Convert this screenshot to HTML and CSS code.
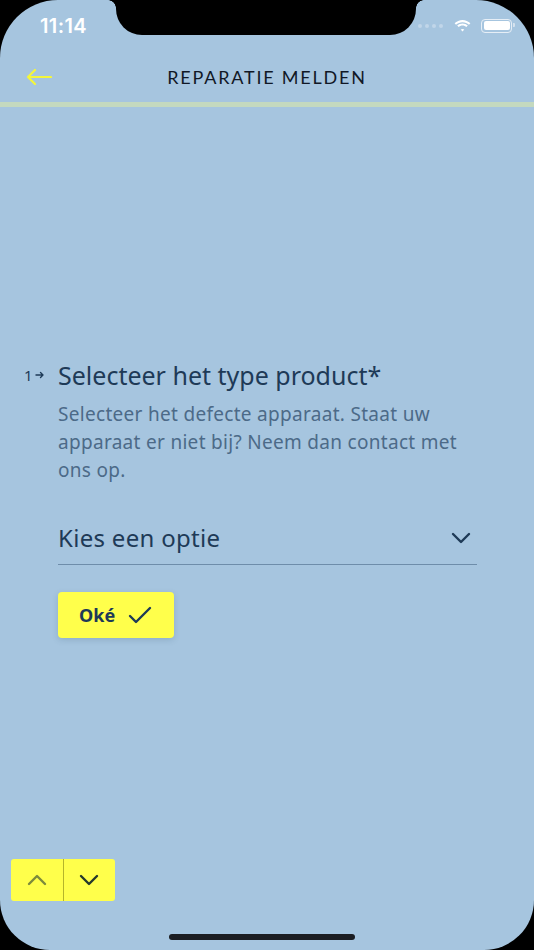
FILE: index.html
```html
<!DOCTYPE html>
<html lang="nl">
<head>
<meta charset="utf-8">
<title>Reparatie melden</title>
<link rel="stylesheet" href="styles.css">
</head>
<body>
<div class="screen">
  <div class="notch"></div>
  <div class="status">
    <span class="time">11:14</span>
    <div class="status-icons">
      <span class="dots"><i></i><i></i><i></i><i></i></span>
      <svg class="wifi" width="17" height="12" viewBox="0 0 17 12"><path d="M8.5 2.2c2.5 0 4.8 1 6.5 2.6l1.4-1.5C14.3 1.3 11.5 0 8.5 0S2.7 1.3.6 3.3L2 4.8c1.7-1.6 4-2.6 6.5-2.6z" fill="#fff"/><path d="M8.5 5.6c1.5 0 2.9.6 3.9 1.5l1.4-1.5C12.4 4.3 10.5 3.5 8.5 3.5S4.6 4.3 3.2 5.6l1.4 1.5c1-.9 2.4-1.5 3.9-1.5z" fill="#fff"/><path d="M8.5 8.9c.7 0 1.3.3 1.8.7L8.5 11.6 6.7 9.6c.5-.4 1.1-.7 1.8-.7z" fill="#fff"/></svg>
      <span class="battery"><span class="battery-fill"></span></span>
    </div>
  </div>
  <header class="topbar">
    <svg class="back" width="26" height="16" viewBox="0 0 26 16"><path d="M25 8H2M9 1 2 8l7 7" fill="none" stroke="#f4f63a" stroke-width="2.2" stroke-linecap="round" stroke-linejoin="round"/></svg>
    <h1 class="title">REPARATIE MELDEN</h1>
  </header>
  <div class="progress"></div>
  <main class="content">
    <div class="question">
      <span class="num">1<svg width="11" height="8" viewBox="0 0 11 8"><path d="M2 4h7M6.5 1.5 9 4 6.5 6.5" fill="none" stroke="#1e3a57" stroke-width="1.4" stroke-linecap="round" stroke-linejoin="round"/></svg></span>
      <div class="qbody">
        <h2 class="qtitle">Selecteer het type product*</h2>
        <p class="qdesc">Selecteer het defecte apparaat. Staat uw apparaat er niet bij? Neem dan contact met ons op.</p>
        <div class="select">
          <span>Kies een optie</span>
          <svg width="20" height="12" viewBox="0 0 20 12"><path d="M2 2l8 8 8-8" fill="none" stroke="#1e3a57" stroke-width="2.4" stroke-linecap="round" stroke-linejoin="round"/></svg>
        </div>
        <button class="ok">Oké <svg width="24" height="18" viewBox="0 0 24 18"><path d="M2 10l6 6L22 2" fill="none" stroke="#1e3a57" stroke-width="2.4" stroke-linecap="round" stroke-linejoin="round"/></svg></button>
      </div>
    </div>
  </main>
  <nav class="pager">
    <button class="pg up"><svg width="20" height="12" viewBox="0 0 20 12"><path d="M2 10l8-8 8 8" fill="none" stroke="#7c8a3c" stroke-width="2.4" stroke-linecap="round" stroke-linejoin="round"/></svg></button>
    <button class="pg"><svg width="20" height="12" viewBox="0 0 20 12"><path d="M2 2l8 8 8-8" fill="none" stroke="#25382c" stroke-width="2.4" stroke-linecap="round" stroke-linejoin="round"/></svg></button>
  </nav>
  <div class="home-bar"></div>
</div>
</body>
</html>
```
FILE: styles.css
```css
* { box-sizing: border-box; }
html, body { margin: 0; padding: 0; background: #000; }
body { width: 534px; height: 950px; overflow: hidden; font-family: "Noto Sans", "Open Sans", sans-serif; }

.screen {
  position: relative;
  width: 534px;
  height: 950px;
  background: #a6c5df;
  border-radius: 58px 58px 50px 50px;
  overflow: hidden;
  display: flex;
  flex-direction: column;
}

.notch {
  position: absolute;
  left: 116px;
  top: 0;
  width: 300px;
  height: 35px;
  background: #000;
  border-radius: 0 0 26px 26px;
}
.notch::before, .notch::after {
  content: "";
  position: absolute;
  top: 0;
  width: 8px;
  height: 8px;
  background: radial-gradient(circle at 0 100%, transparent 7.5px, #000 8px);
}
.notch::before { left: -8px; }
.notch::after { right: -8px; background: radial-gradient(circle at 100% 100%, transparent 7.5px, #000 8px); }

.status {
  height: 52px;
  display: flex;
  justify-content: space-between;
  align-items: center;
  padding: 0 22px 0 40px;
}
.time {
  color: #fff;
  font-family: "Inter", "Noto Sans", sans-serif;
  font-weight: 600;
  font-size: 20px;
  letter-spacing: 0.4px;
}
.status-icons { display: flex; align-items: center; gap: 10px; margin-top: -1px; }
.dots { display: flex; gap: 3px; margin-right: 1px; }
.dots i { width: 4px; height: 4px; border-radius: 50%; background: #c1d6e9; display: block; }
.battery {
  width: 31px; height: 14px;
  border: 1.5px solid #e6eef6;
  border-radius: 4px;
  padding: 1.5px;
  position: relative;
  display: block;
}
.battery::after {
  content: ""; position: absolute; right: -4px; top: 3.5px; width: 2px; height: 4px; background: #d5e2ee; border-radius: 0 1px 1px 0;
}
.battery-fill { display: block; width: 100%; height: 100%; background: #fff; border-radius: 2px; }

.topbar {
  display: flex;
  align-items: center;
  position: relative;
  height: 50px;
  padding-left: 26px;
}
.back { display: block; }
.title {
  margin: 0;
  position: absolute;
  left: 0; right: 0;
  text-align: center;
  font-family: "Lato", "Noto Sans", sans-serif;
  font-weight: 400;
  font-size: 18px;
  letter-spacing: 1.8px;
  color: #111826;
  pointer-events: none;
}

.progress { height: 5px; background: #c4d9bf; }

.content {
  flex: 1;
  display: flex;
  flex-direction: column;
  padding-top: 253px;
}
.question { display: flex; padding-left: 24px; padding-right: 57px; }
.num {
  width: 34px;
  font-size: 15px;
  color: #1e3a57;
  padding-top: 10px;
  display: flex;
  align-items: center;
  height: 20px;
  gap: 1px;
}
.qbody { flex: 1; }
.qtitle {
  margin: 0;
  font-weight: 400;
  font-size: 25px;
  color: #1e3a57;
  line-height: 30px;
}
.qdesc {
  margin: 10px 0 0;
  font-size: 19px;
  line-height: 28px;
  color: #4c6a88;
  letter-spacing: 0.3px;
}
.select {
  margin-top: 37px;
  display: flex;
  justify-content: space-between;
  align-items: center;
  height: 44px;
  border-bottom: 1.5px solid #6e8daa;
  color: #1e3a57;
  font-size: 24px;
  padding-bottom: 10px;
  padding-right: 6px;
}
.select span { letter-spacing: 0.3px; }
.ok {
  margin-top: 27px;
  width: 116px;
  height: 46px;
  background: #ffff4b;
  border: none;
  border-radius: 4px;
  box-shadow: 0 2px 6px rgba(40, 70, 100, 0.18);
  display: flex;
  align-items: center;
  padding: 0 0 0 21px;
  gap: 13px;
  font-family: "Noto Sans", sans-serif;
  font-weight: 700;
  font-size: 18px;
  color: #1e3a57;
}

.pager {
  display: flex;
  margin: 0 0 49px 11px;
  width: 104px;
  height: 42px;
  border-radius: 3px;
  overflow: hidden;
}
.pg {
  flex: 1;
  border: none;
  background: #ffff4b;
  display: flex;
  align-items: center;
  justify-content: center;
  padding: 0;
}
.pg.up { border-right: 1.5px solid #b5b52a; }

.home-bar {
  position: absolute;
  left: 169px;
  bottom: 10px;
  width: 186px;
  height: 6px;
  border-radius: 3px;
  background: #1b1d22;
}
```
